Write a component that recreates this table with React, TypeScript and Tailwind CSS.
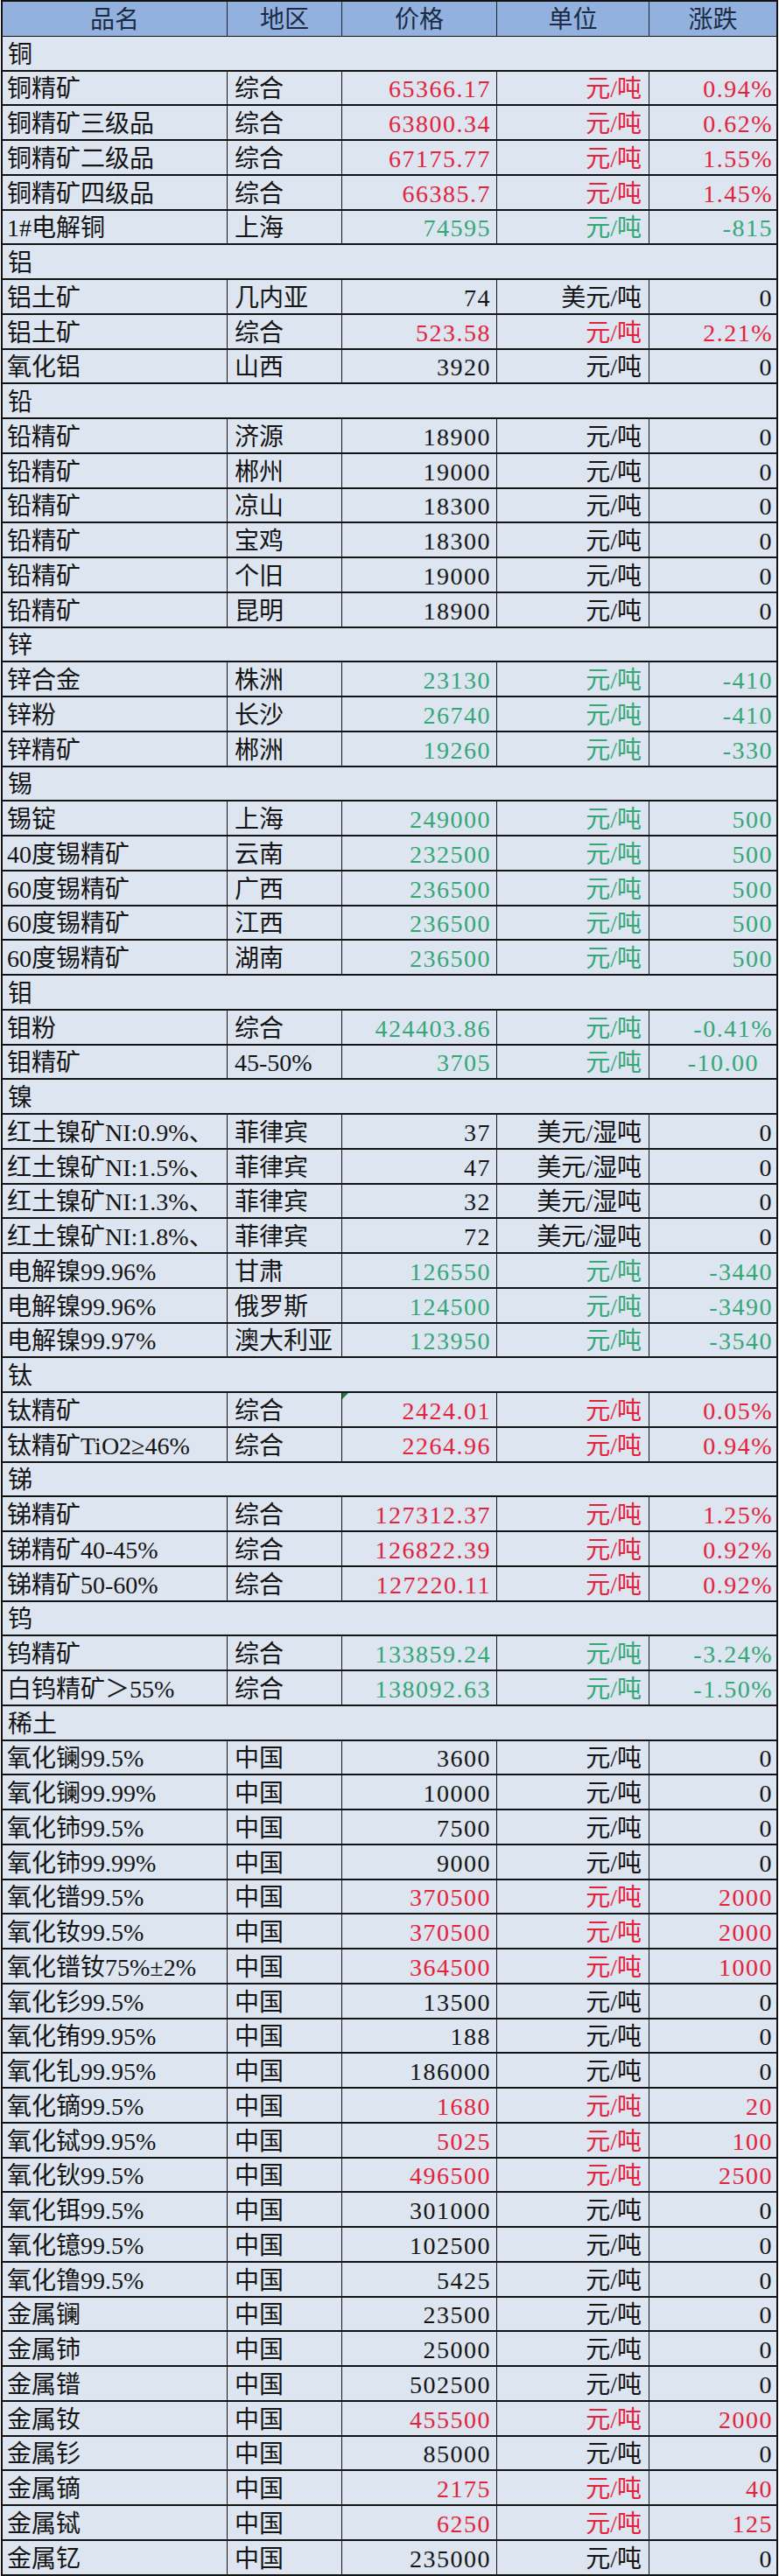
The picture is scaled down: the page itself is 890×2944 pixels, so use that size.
import React from 'react';

type Tone = 'r' | 'g' | '';
type Item = [string, string, string, string, string, Tone];

const sections: { title: string; items: Item[] }[] = [
  {
    title: '铜',
    items: [
      ['铜精矿', '综合', '65366.17', '元/吨', '0.94%', 'r'],
      ['铜精矿三级品', '综合', '63800.34', '元/吨', '0.62%', 'r'],
      ['铜精矿二级品', '综合', '67175.77', '元/吨', '1.55%', 'r'],
      ['铜精矿四级品', '综合', '66385.7', '元/吨', '1.45%', 'r'],
      ['1#电解铜', '上海', '74595', '元/吨', '-815', 'g'],
    ],
  },
  {
    title: '铝',
    items: [
      ['铝土矿', '几内亚', '74', '美元/吨', '0', ''],
      ['铝土矿', '综合', '523.58', '元/吨', '2.21%', 'r'],
      ['氧化铝', '山西', '3920', '元/吨', '0', ''],
    ],
  },
  {
    title: '铅',
    items: [
      ['铅精矿', '济源', '18900', '元/吨', '0', ''],
      ['铅精矿', '郴州', '19000', '元/吨', '0', ''],
      ['铅精矿', '凉山', '18300', '元/吨', '0', ''],
      ['铅精矿', '宝鸡', '18300', '元/吨', '0', ''],
      ['铅精矿', '个旧', '19000', '元/吨', '0', ''],
      ['铅精矿', '昆明', '18900', '元/吨', '0', ''],
    ],
  },
  {
    title: '锌',
    items: [
      ['锌合金', '株洲', '23130', '元/吨', '-410', 'g'],
      ['锌粉', '长沙', '26740', '元/吨', '-410', 'g'],
      ['锌精矿', '郴洲', '19260', '元/吨', '-330', 'g'],
    ],
  },
  {
    title: '锡',
    items: [
      ['锡锭', '上海', '249000', '元/吨', '500', 'g'],
      ['40度锡精矿', '云南', '232500', '元/吨', '500', 'g'],
      ['60度锡精矿', '广西', '236500', '元/吨', '500', 'g'],
      ['60度锡精矿', '江西', '236500', '元/吨', '500', 'g'],
      ['60度锡精矿', '湖南', '236500', '元/吨', '500', 'g'],
    ],
  },
  {
    title: '钼',
    items: [
      ['钼粉', '综合', '424403.86', '元/吨', '-0.41%', 'g'],
      ['钼精矿', '45-50%', '3705', '元/吨', '-10.00 ', 'g'],
    ],
  },
  {
    title: '镍',
    items: [
      ['红土镍矿NI:0.9%、', '菲律宾', '37', '美元/湿吨', '0', ''],
      ['红土镍矿NI:1.5%、', '菲律宾', '47', '美元/湿吨', '0', ''],
      ['红土镍矿NI:1.3%、', '菲律宾', '32', '美元/湿吨', '0', ''],
      ['红土镍矿NI:1.8%、', '菲律宾', '72', '美元/湿吨', '0', ''],
      ['电解镍99.96%', '甘肃', '126550', '元/吨', '-3440', 'g'],
      ['电解镍99.96%', '俄罗斯', '124500', '元/吨', '-3490', 'g'],
      ['电解镍99.97%', '澳大利亚', '123950', '元/吨', '-3540', 'g'],
    ],
  },
  {
    title: '钛',
    items: [
      ['钛精矿', '综合', '2424.01', '元/吨', '0.05%', 'r'],
      ['钛精矿TiO2≥46%', '综合', '2264.96', '元/吨', '0.94%', 'r'],
    ],
  },
  {
    title: '锑',
    items: [
      ['锑精矿', '综合', '127312.37', '元/吨', '1.25%', 'r'],
      ['锑精矿40-45%', '综合', '126822.39', '元/吨', '0.92%', 'r'],
      ['锑精矿50-60%', '综合', '127220.11', '元/吨', '0.92%', 'r'],
    ],
  },
  {
    title: '钨',
    items: [
      ['钨精矿', '综合', '133859.24', '元/吨', '-3.24%', 'g'],
      ['白钨精矿＞55%', '综合', '138092.63', '元/吨', '-1.50%', 'g'],
    ],
  },
  {
    title: '稀土',
    items: [
      ['氧化镧99.5%', '中国', '3600', '元/吨', '0', ''],
      ['氧化镧99.99%', '中国', '10000', '元/吨', '0', ''],
      ['氧化铈99.5%', '中国', '7500', '元/吨', '0', ''],
      ['氧化铈99.99%', '中国', '9000', '元/吨', '0', ''],
      ['氧化镨99.5%', '中国', '370500', '元/吨', '2000', 'r'],
      ['氧化钕99.5%', '中国', '370500', '元/吨', '2000', 'r'],
      ['氧化镨钕75%±2%', '中国', '364500', '元/吨', '1000', 'r'],
      ['氧化钐99.5%', '中国', '13500', '元/吨', '0', ''],
      ['氧化铕99.95%', '中国', '188', '元/吨', '0', ''],
      ['氧化钆99.95%', '中国', '186000', '元/吨', '0', ''],
      ['氧化镝99.5%', '中国', '1680', '元/吨', '20', 'r'],
      ['氧化铽99.95%', '中国', '5025', '元/吨', '100', 'r'],
      ['氧化钬99.5%', '中国', '496500', '元/吨', '2500', 'r'],
      ['氧化铒99.5%', '中国', '301000', '元/吨', '0', ''],
      ['氧化镱99.5%', '中国', '102500', '元/吨', '0', ''],
      ['氧化镥99.5%', '中国', '5425', '元/吨', '0', ''],
      ['金属镧', '中国', '23500', '元/吨', '0', ''],
      ['金属铈', '中国', '25000', '元/吨', '0', ''],
      ['金属镨', '中国', '502500', '元/吨', '0', ''],
      ['金属钕', '中国', '455500', '元/吨', '2000', 'r'],
      ['金属钐', '中国', '85000', '元/吨', '0', ''],
      ['金属镝', '中国', '2175', '元/吨', '40', 'r'],
      ['金属铽', '中国', '6250', '元/吨', '125', 'r'],
      ['金属钇', '中国', '235000', '元/吨', '0', ''],
    ],
  },
];

const toneClass = (t: Tone) =>
  t === 'r' ? 'text-[#e3233b]' : t === 'g' ? 'text-[#35a777]' : 'text-[#141414]';

const grid =
  'grid grid-cols-[257px_131px_177px_174px_145px] h-[39.75px] border-b-2 border-[#121212]';
const cell = 'flex items-center pt-[4px] whitespace-nowrap overflow-hidden';

const App = () => {
  return (
    <div className="w-[890px] bg-white">
      <div
        className="ml-[1px] w-[888px] border-x-2 border-t-2 border-[#121212] bg-[#dde5f0] text-[28px] leading-none"
        style={{ fontFamily: '"Liberation Serif", "Noto Sans CJK SC", serif' }}
      >
        {/* header */}
        <div className={`${grid} bg-[#93b1de] text-[#1c2b45] border-b-[1.5px] border-[#2a2f3a]`}>
          {['品名', '地区', '价格', '单位', '涨跌'].map((h, i) => (
            <div
              key={h}
              className={`${cell} justify-center ${i < 4 ? 'border-r-[1.5px] border-[#1b2433]' : ''}`}
            >
              {h}
            </div>
          ))}
        </div>

        {sections.map((s) => (
          <React.Fragment key={s.title}>
            <div className="flex items-center h-[39.75px] border-b-2 border-[#121212] pl-[6px] pt-[4px] text-[#141414]">
              {s.title}
            </div>
            {s.items.map(([name, region, price, unit, change, tone], idx) => (
              <div key={s.title + idx} className={grid}>
                <div className={`${cell} pl-[5px] text-[#141414] border-r-[1.5px] border-[#121212]`}>
                  {name}
                </div>
                <div className={`${cell} pl-[8px] text-[#141414] border-r-[1.5px] border-[#121212]`}>
                  {region}
                </div>
                <div
                  className={`${cell} relative justify-end pr-[6px] tracking-[1.5px] border-r-[1.5px] border-[#121212] ${toneClass(tone)}`}
                >
                  {s.title === '钛' && idx === 0 && (
                    <span className="absolute left-0 top-0 w-0 h-0 border-t-[7px] border-r-[7px] border-t-[#1f7a45] border-r-transparent" />
                  )}
                  {price}
                </div>
                <div className={`${cell} justify-end pr-[8px] border-r-[1.5px] border-[#121212] ${toneClass(tone)}`}>
                  {unit}
                </div>
                <div
                  className={`${cell} justify-end tracking-[1.5px] ${change.endsWith(' ') ? 'pr-[20px]' : 'pr-[4px]'} ${toneClass(tone)}`}
                >
                  {change.trim()}
                </div>
              </div>
            ))}
          </React.Fragment>
        ))}
      </div>
    </div>
  );
};

export default App;
